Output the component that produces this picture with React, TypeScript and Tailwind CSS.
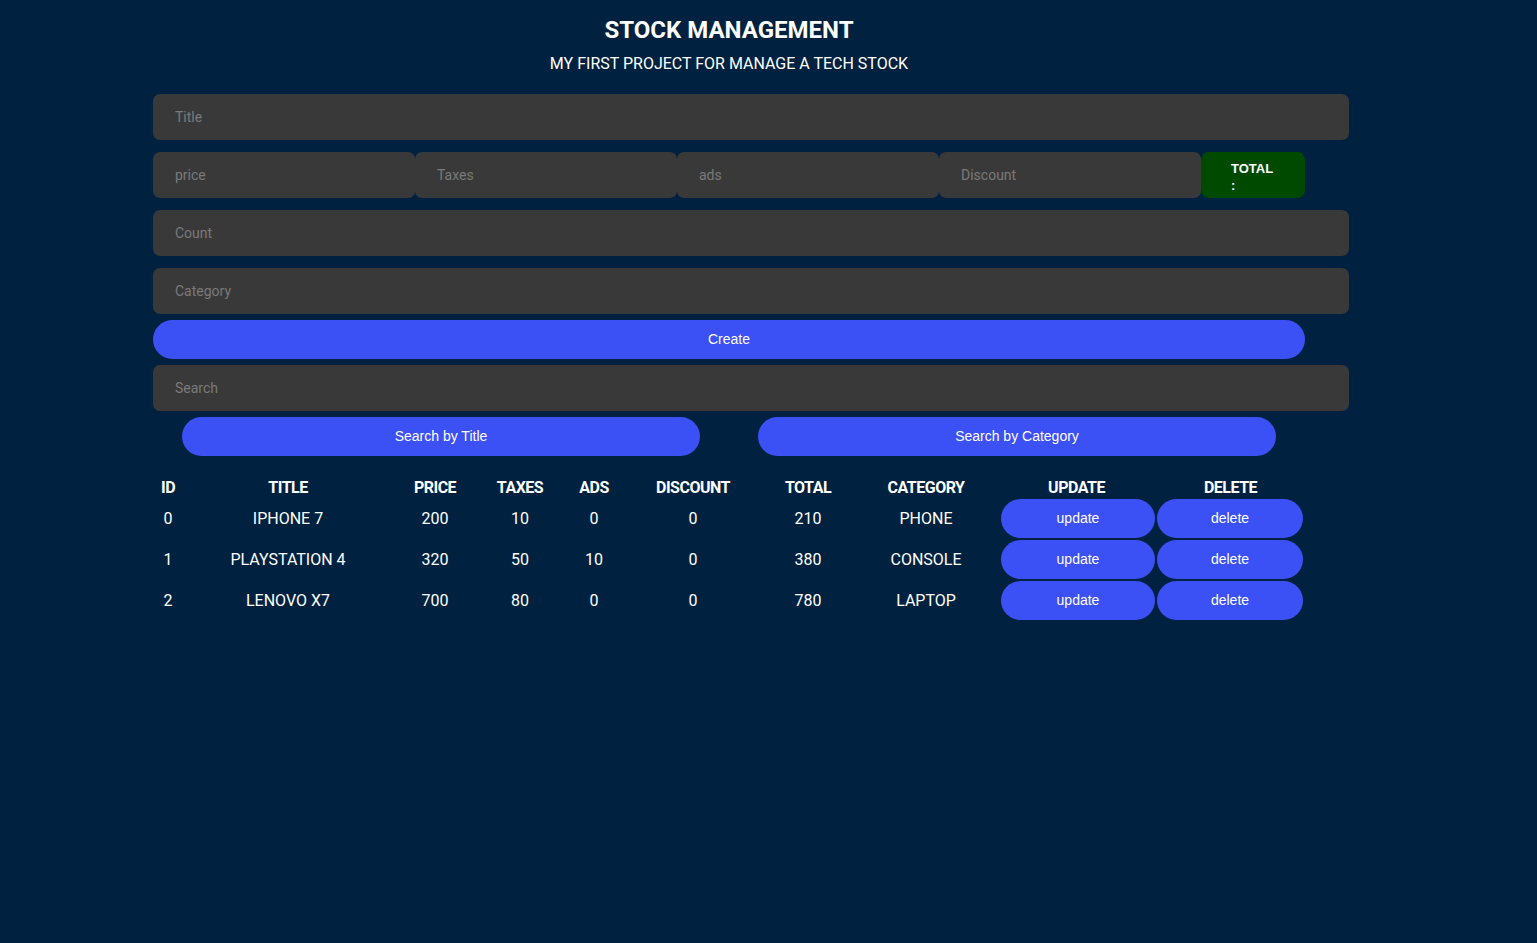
import React from 'react';

type Product = {
  id: number;
  title: string;
  price: number;
  taxes: number;
  ads: number;
  discount: number;
  total: number;
  category: string;
};

const products: Product[] = [
  { id: 0, title: 'IPHONE 7', price: 200, taxes: 10, ads: 0, discount: 0, total: 210, category: 'PHONE' },
  { id: 1, title: 'PLAYSTATION 4', price: 320, taxes: 50, ads: 10, discount: 0, total: 380, category: 'CONSOLE' },
  { id: 2, title: 'LENOVO X7', price: 700, taxes: 80, ads: 0, discount: 0, total: 780, category: 'LAPTOP' },
];

const inputCls =
  'h-[46px] rounded-[7px] bg-[#393939] px-[22px] text-[14px] text-white placeholder:text-[#7a7a7a] outline-none';

const btnCls =
  "h-[39px] rounded-[20px] bg-[#3b50f5] font-['Liberation_Sans',sans-serif] text-[14px] text-white";

export default function App() {
  return (
    <div className="min-h-[943px] bg-[#002240] font-['Roboto',sans-serif] text-white">
      <div className="ml-[153px] w-[1152px] pt-[16px]">
        {/* header */}
        <div className="text-center">
          <h1 className="text-[24px] font-bold leading-[28px]">STOCK MANAGEMENT</h1>
          <p className="mt-[10px] text-[16px] leading-[20px]">MY FIRST PROJECT FOR MANAGE A TECH STOCK</p>
        </div>

        {/* form */}
        <div className="mt-[20px] flex flex-col">
          <input className={`${inputCls} w-[1196px]`} placeholder="Title" />
          <div className="mt-[12px] flex">
            <input className={`${inputCls} w-[262px]`} placeholder="price" />
            <input className={`${inputCls} w-[262px]`} placeholder="Taxes" />
            <input className={`${inputCls} w-[262px]`} placeholder="ads" />
            <input className={`${inputCls} w-[262px]`} placeholder="Discount" />
            <div className="flex h-[46px] w-[104px] flex-col justify-center rounded-[8px] bg-[#004a00] pl-[30px] pt-[3px] font-['Liberation_Sans',sans-serif] text-[13px] font-bold leading-[17px] text-white">
              <span>TOTAL</span>
              <span>:</span>
            </div>
          </div>
          <input className={`${inputCls} mt-[12px] w-[1196px]`} placeholder="Count" />
          <input className={`${inputCls} mt-[12px] w-[1196px]`} placeholder="Category" />
          <button className={`${btnCls} mt-[6px] w-[1152px]`}>Create</button>
          <input className={`${inputCls} mt-[6px] w-[1196px]`} placeholder="Search" />
          <div className="mt-[6px] flex justify-around">
            <button className={`${btnCls} w-[518px]`}>Search by Title</button>
            <button className={`${btnCls} w-[518px]`}>Search by Category</button>
          </div>
        </div>

        {/* table */}
        <table className="mt-[22px] w-[1152px] table-fixed border-collapse text-center text-[16px]">
          <colgroup>
            <col className="w-[30px]" />
            <col className="w-[210px]" />
            <col className="w-[84px]" />
            <col className="w-[86px]" />
            <col className="w-[62px]" />
            <col className="w-[136px]" />
            <col className="w-[94px]" />
            <col className="w-[142px]" />
            <col className="w-[159px]" />
            <col className="w-[149px]" />
          </colgroup>
          <thead>
            <tr className="h-[20px] text-[16px] font-bold leading-[20px] tracking-[-0.5px]">
              <th>ID</th>
              <th>TITLE</th>
              <th>PRICE</th>
              <th>TAXES</th>
              <th>ADS</th>
              <th>DISCOUNT</th>
              <th>TOTAL</th>
              <th>CATEGORY</th>
              <th>UPDATE</th>
              <th>DELETE</th>
            </tr>
          </thead>
          <tbody>
            {products.map((p) => (
              <tr key={p.id} className="h-[41px]">
                <td>{p.id}</td>
                <td>{p.title}</td>
                <td>{p.price}</td>
                <td>{p.taxes}</td>
                <td>{p.ads}</td>
                <td>{p.discount}</td>
                <td>{p.total}</td>
                <td>{p.category}</td>
                <td className="pl-[4px] pr-[1px] py-[1px]">
                  <button className={`${btnCls} w-[154px]`}>update</button>
                </td>
                <td className="pl-[1px] pr-[2px] py-[1px]">
                  <button className={`${btnCls} w-[146px]`}>delete</button>
                </td>
              </tr>
            ))}
          </tbody>
        </table>
      </div>
    </div>
  );
}
